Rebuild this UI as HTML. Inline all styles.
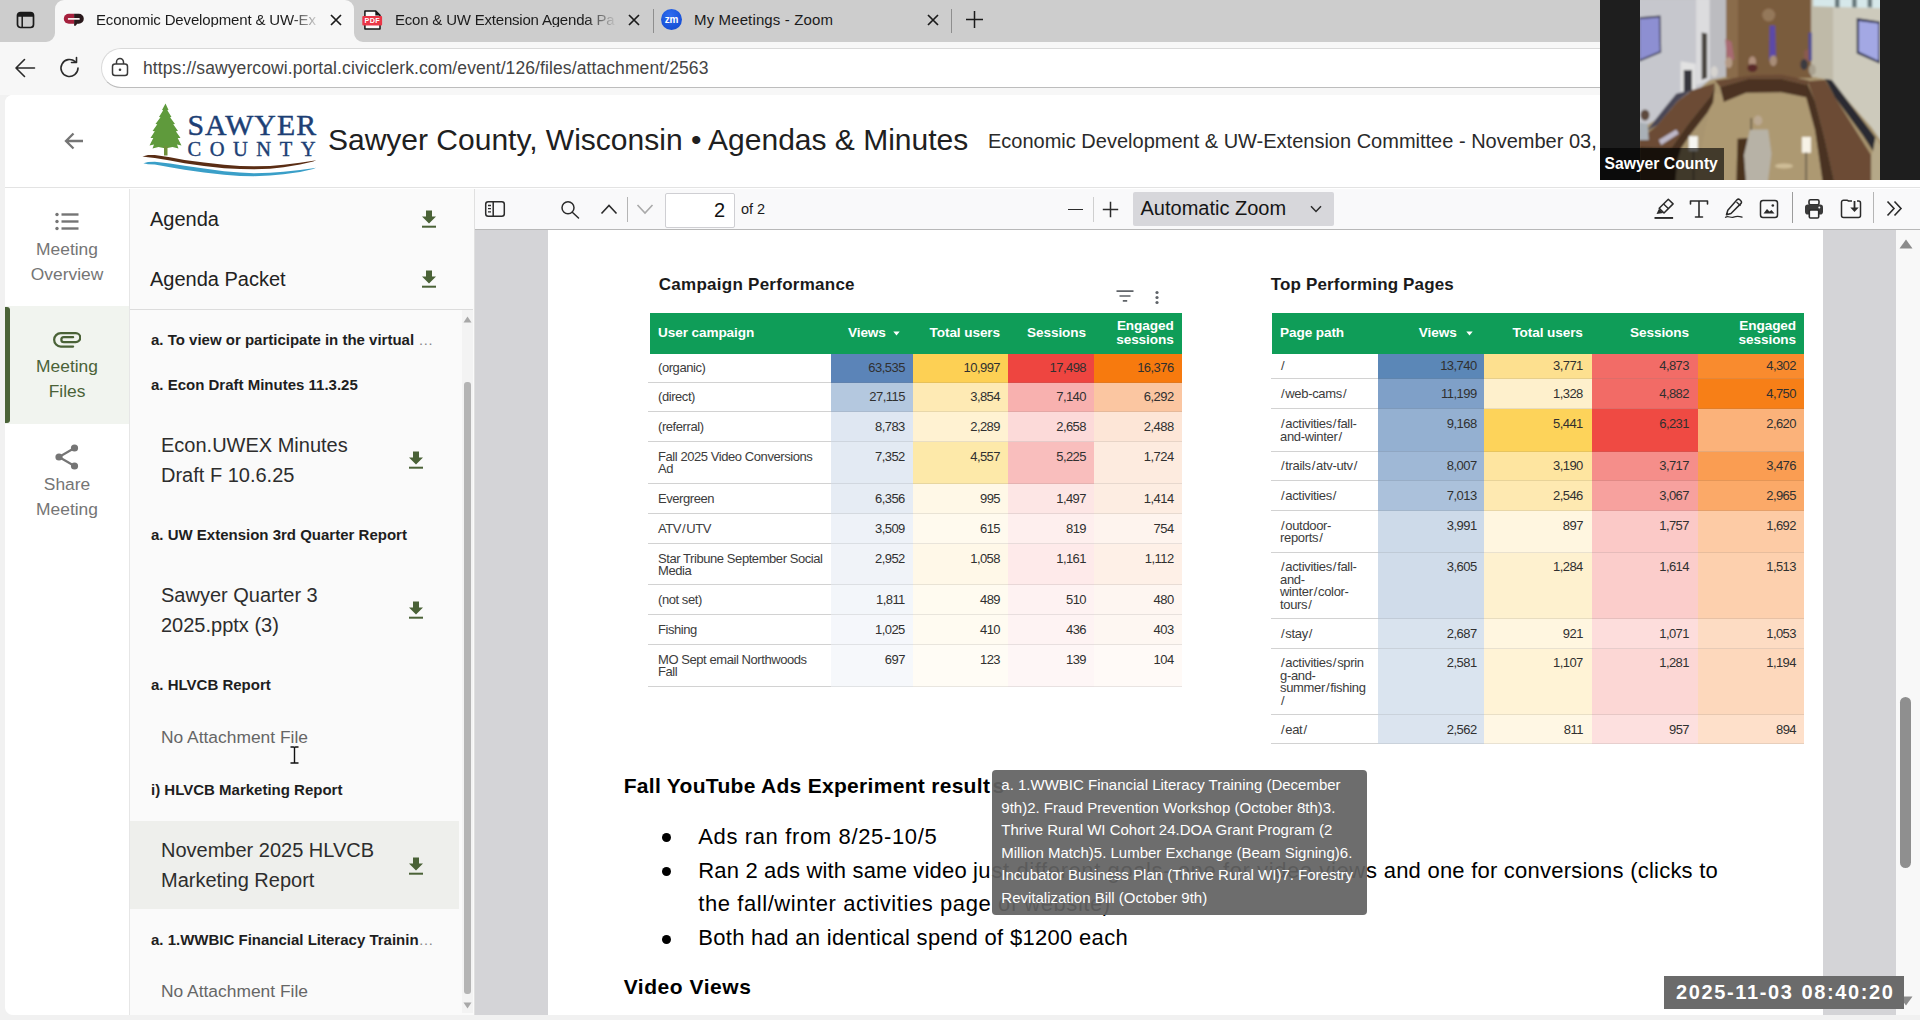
<!DOCTYPE html>
<html lang="en">
<head>
<meta charset="utf-8">
<title>Economic Development &amp; UW-Extension Committee</title>
<style>
*{box-sizing:border-box;margin:0;padding:0}
html,body{width:1920px;height:1020px;overflow:hidden;background:#fff}
body{font-family:"Liberation Sans",sans-serif;color:#1f1f1f;position:relative}
.abs{position:absolute}
#root{position:absolute;left:0;top:0;width:1920px;height:1020px;overflow:hidden;background:#f1f1f1}
.t{position:absolute;white-space:nowrap;line-height:1}
/* browser chrome */
#tabbar{left:0;top:0;width:1920px;height:42px;background:#cdcdcd}
#acttab{left:55px;top:0;width:299px;height:42px;background:#f7f7f7;border-radius:9px 9px 0 0}
#toolbar{left:0;top:42px;width:1920px;height:53px;background:#f7f7f7}
#pill{left:101px;top:48px;width:1830px;height:40px;background:#fff;border:1px solid #d9d9d9;border-bottom-color:#bdbdbd;border-radius:20px}
/* page */
#page{left:5px;top:95px;width:1915px;height:925px;background:#fff;border-radius:8px 0 0 0}
#hdr{left:5px;top:95px;width:1915px;height:93px;background:#fff;border-bottom:1px solid #e3e3e3;border-radius:8px 0 0 0}
#nav{left:5px;top:189px;width:124px;height:831px;background:#fff}
#files{left:129px;top:189px;width:345px;height:831px;background:#fafafa;border-left:1px solid #e6e6e6}
#pdf{left:474px;top:189px;width:1446px;height:831px;background:#d4d4d7;border-left:1px solid #e0e0e0}
#pdftb{left:475px;top:189px;width:1445px;height:41px;background:#f9f9fa;border-bottom:1px solid #b8b8b8}
#sheet{left:548px;top:230px;width:1275px;height:790px;background:#fff}
#vscroll{left:1896px;top:230px;width:24px;height:790px;background:#f8f8f8}
</style>
</head>
<body>
<div id="root">
<!-- BROWSER CHROME -->
<div id="tabbar" class="abs"></div>
<div id="acttab" class="abs"></div>
<div id="toolbar" class="abs"></div>
<div id="pill" class="abs"></div>
<!-- PAGE -->
<div id="page" class="abs"></div>
<div id="hdr" class="abs"></div>
<div id="nav" class="abs"></div>
<div id="files" class="abs"></div>
<div id="pdf" class="abs"></div>
<div id="pdftb" class="abs"></div>
<div id="sheet" class="abs"></div>
<div id="vscroll" class="abs"></div>
<!--CHROME-START-->
<svg class="abs" style="left:46px;top:33px" width="9" height="9" viewBox="0 0 9 9"><path d="M9 0v9H0A9 9 0 0 0 9 0z" fill="#f7f7f7"/></svg>
<svg class="abs" style="left:354px;top:33px" width="9" height="9" viewBox="0 0 9 9"><path d="M0 0v9h9A9 9 0 0 1 0 0z" fill="#f7f7f7"/></svg>
<!-- tab actions icon -->
<svg class="abs" style="left:15px;top:9px" width="22" height="22" viewBox="0 0 22 22"><rect x="2.5" y="3.5" width="16" height="15" rx="3" fill="none" stroke="#1b1b1b" stroke-width="1.7"/><path d="M2.5 6.5a3 3 0 0 1 3-3h10a3 3 0 0 1 3 3v1.2h-16z" fill="#1b1b1b"/><line x1="7.2" y1="7" x2="7.2" y2="18" stroke="#1b1b1b" stroke-width="1.5"/></svg>
<!-- tab 1 -->
<svg class="abs" style="left:63px;top:11px" width="22" height="16" viewBox="0 0 22 16"><path d="M11.100 2.800H5.800a5 5 0 0 0 0 10H11.100z" fill="#a5203d"/><path d="M11.100 2.800H15.800a5 5 0 0 1 0 10H14.200L12.600 14.800H11.100z" fill="#2a191c"/><rect x="4.900" y="6.900" width="11.800" height="1.800" rx="0.500" fill="#f7f0f0"/></svg>
<div class="t" id="tab1t" style="left:96px;top:12px;font-size:15px;letter-spacing:-0.15px;color:#1b1b1b;width:226px;overflow:hidden;-webkit-mask-image:linear-gradient(90deg,#000 86%,transparent 100%)">Economic Development &amp; UW-Ex</div>
<svg class="abs" style="left:330px;top:14px" width="12" height="12" viewBox="0 0 12 12"><path d="M1 1l10 10M11 1L1 11" stroke="#1b1b1b" stroke-width="1.7"/></svg>
<!-- tab 2 -->
<svg class="abs" style="left:362px;top:9px" width="22" height="24" viewBox="0 0 22 24"><path d="M2.900 1.900h10.600l4.500 4.500v13.600h-15.100z" fill="#fafafa" stroke="#151515" stroke-width="1.500" stroke-linejoin="round"/><path d="M13.300 1.900v4.700h4.700z" fill="#151515"/><rect x="0.300" y="7.100" width="19.800" height="9.400" rx="1" fill="#ea3546"/><text x="10.200" y="14.400" font-family="Liberation Sans,sans-serif" font-size="7.200" font-weight="700" fill="#fff" text-anchor="middle" letter-spacing="0.300">PDF</text></svg>
<div class="t" id="tab2t" style="left:395px;top:12px;font-size:15px;letter-spacing:-0.2px;color:#1b1b1b;width:222px;overflow:hidden;-webkit-mask-image:linear-gradient(90deg,#000 86%,transparent 100%)">Econ &amp; UW Extension Agenda Pa</div>
<svg class="abs" style="left:628px;top:14px" width="12" height="12" viewBox="0 0 12 12"><path d="M1 1l10 10M11 1L1 11" stroke="#1b1b1b" stroke-width="1.7"/></svg>
<div class="abs" style="left:653px;top:9px;width:1px;height:24px;background:#8e8e8e"></div>
<!-- tab 3 -->
<div class="abs" style="left:661px;top:9px;width:21px;height:21px;border-radius:50%;background:radial-gradient(circle at 45% 30%,#2f6cf0,#0d45cc)"></div>
<div class="t" style="left:663px;top:14.500px;font-size:10px;font-weight:700;color:#fff;width:17px;text-align:center;letter-spacing:-0.3px">zm</div>
<div class="t" id="tab3t" style="left:694px;top:12px;font-size:15px;letter-spacing:0.13px;color:#1b1b1b">My Meetings - Zoom</div>
<svg class="abs" style="left:927px;top:14px" width="12" height="12" viewBox="0 0 12 12"><path d="M1 1l10 10M11 1L1 11" stroke="#1b1b1b" stroke-width="1.7"/></svg>
<div class="abs" style="left:951px;top:9px;width:1px;height:24px;background:#8e8e8e"></div>
<svg class="abs" style="left:965px;top:10px" width="19" height="19" viewBox="0 0 19 19"><path d="M9.500 1v17M1 9.500h17" stroke="#1b1b1b" stroke-width="1.500"/></svg>
<!-- toolbar -->
<svg class="abs" style="left:14px;top:57px" width="22" height="22" viewBox="0 0 22 22"><path d="M20.500 11H2.500M10.500 2.500L2 11l8.500 8.500" fill="none" stroke="#2a2a2a" stroke-width="1.600" stroke-linecap="round" stroke-linejoin="round"/></svg>
<svg class="abs" style="left:58px;top:56px" width="24" height="24" viewBox="0 0 24 24"><path d="M20 12a8.500 8.500 0 1 1-2.800-6.300" fill="none" stroke="#2a2a2a" stroke-width="1.600" stroke-linecap="round"/><path d="M18.500 1.500v5h-5" fill="none" stroke="#2a2a2a" stroke-width="1.600" stroke-linecap="round" stroke-linejoin="round"/></svg>
<svg class="abs" style="left:111px;top:57px" width="18" height="20" viewBox="0 0 18 20"><rect x="1.500" y="7" width="15" height="11.500" rx="2.500" fill="none" stroke="#3a3a3a" stroke-width="1.500"/><path d="M5.500 7V5a3.500 3.500 0 0 1 7 0v2" fill="none" stroke="#3a3a3a" stroke-width="1.500"/><circle cx="9" cy="12.700" r="1.300" fill="#3a3a3a"/></svg>
<div class="t" id="urlt" style="left:143px;top:60px;font-size:17.500px;color:#444;letter-spacing:0.1px">https://sawyercowi.portal.civicclerk.com/event/126/files/attachment/2563</div>
<!--CHROME-END-->
<!--HEADER-START-->
<svg class="abs" style="left:62px;top:129px" width="24" height="24" viewBox="0 0 24 24"><path d="M21 12H4M11.500 4.500L4 12l7.500 7.500" fill="none" stroke="#757575" stroke-width="2.300"/></svg>
<!-- logo -->
<svg class="abs" style="left:140px;top:100px" width="180" height="80" viewBox="140 100 180 80">
<path d="M165.500 103.500L168.500 110l-1.200 0.300L171.500 117l-1.500 0.300L175 124l-1.800 0.300L178 131l-2.200 0.200L180.500 138l-2.800 0L181.500 145.500l-4.500 -1L178.500 148.500l-6 -1.500L167.500 148l-4 0l-5 -1l-6 1.500L154 144.500l-4.500 1L153.300 138l-2.800 0L154.800 131.200l-2.200 -0.200L157.300 124.300l-1.800 -0.300L160.500 117.300l-1.500 -0.300L163.200 110.300l-1.200 -0.300z" fill="#5f9a3c"/>
<rect x="164" y="146" width="3.500" height="9.500" fill="#6f8f3a"/>
<path d="M142.4 156.4 L148.0 155.0 L154.8 154.9 L170.0 157.2 L184.5 159.9 L204.0 162.6 L224.1 164.8 L240.0 165.9 L253.8 166.3 L270.0 165.9 L283.5 164.8 L300.0 162.8 L313.2 160.8 L316.2 160.3 L313.2 161.6 L300.0 164.6 L283.5 167.3 L270.0 168.7 L253.8 169.3 L240.0 169.1 L224.1 168.3 L204.0 166.0 L184.5 163.3 L170.0 160.6 L154.8 157.9 L148.0 157.3z" fill="#5a2d14"/>
<path d="M143.4 163.3 L148.0 162.0 L154.8 161.8 L170.0 163.6 L184.5 165.8 L204.0 168.6 L224.1 171.2 L240.0 172.6 L253.8 173.2 L270.0 172.8 L283.5 171.7 L300.0 170.0 L313.2 168.3 L316.0 167.8 L313.2 169.0 L300.0 171.9 L283.5 174.2 L270.0 175.6 L253.8 176.2 L240.0 175.9 L224.1 174.7 L204.0 172.4 L184.5 169.8 L170.0 167.2 L154.8 164.6 L148.0 164.2z" fill="#3a9fc8"/>
<text x="187.500" y="135.200" font-family="Liberation Serif,serif" font-size="29.800" fill="#1d3f75" stroke="#1d3f75" stroke-width="0.450" textLength="128.500" lengthAdjust="spacing">SAWYER</text>
<text x="187.500" y="155.900" font-family="Liberation Serif,serif" font-size="20.500" fill="#1d3f75" stroke="#1d3f75" stroke-width="0.400" textLength="128" lengthAdjust="spacing">COUNTY</text>
</svg>
<div class="t" id="ttl" style="left:328px;top:125px;font-size:30px;color:#202020">Sawyer County, Wisconsin • Agendas &amp; Minutes</div>
<div class="t" id="sub" style="left:988px;top:131px;font-size:20px;color:#2a2a2a">Economic Development &amp; UW-Extension Committee - November 03,</div>
<!--HEADER-END-->
<!--NAV-START-->
<div class="abs" style="left:5px;top:306px;width:124px;height:118px;background:#f1f4ef"></div>
<div class="abs" style="left:5px;top:307px;width:5px;height:116px;background:#4a6237;border-radius:0 3px 3px 0"></div>
<svg class="abs" style="left:55px;top:211px" width="24" height="22" viewBox="0 0 24 22"><g fill="#757575"><circle cx="2" cy="3.500" r="1.700"/><circle cx="2" cy="10.500" r="1.700"/><circle cx="2" cy="17.500" r="1.700"/><rect x="6.500" y="2.300" width="17" height="2.400"/><rect x="6.500" y="9.300" width="17" height="2.400"/><rect x="6.500" y="16.300" width="17" height="2.400"/></g></svg>
<div class="t" style="left:5px;top:241px;font-size:17.4px;color:#757575;width:124px;text-align:center;">Meeting</div>
<div class="t" style="left:5px;top:266px;font-size:17.4px;color:#757575;width:124px;text-align:center;">Overview</div>
<svg class="abs" style="left:53px;top:330px" width="28" height="19" viewBox="0 0 28 19"><path d="M20.100 16.500H7.800A6.650 6.650 0 0 1 7.800 3.200H22.800A4.450 4.450 0 0 1 22.800 12.100H10.800A2.450 2.450 0 0 1 10.800 7.200H20.100" fill="none" stroke="#4a6237" stroke-width="2.250" stroke-linecap="round"/></svg>
<div class="t" style="left:5px;top:358px;font-size:17.4px;color:#4a6237;width:124px;text-align:center;">Meeting</div>
<div class="t" style="left:5px;top:383px;font-size:17.4px;color:#4a6237;width:124px;text-align:center;">Files</div>
<svg class="abs" style="left:54px;top:443px" width="26" height="28" viewBox="0 0 26 28"><g fill="#757575"><circle cx="20.500" cy="5" r="3.600"/><circle cx="5" cy="14" r="3.600"/><circle cx="20.500" cy="23" r="3.600"/></g><path d="M20.500 5L5 14l15.500 9" fill="none" stroke="#757575" stroke-width="2.200"/></svg>
<div class="t" style="left:5px;top:476px;font-size:17.4px;color:#757575;width:124px;text-align:center;">Share</div>
<div class="t" style="left:5px;top:501px;font-size:17.4px;color:#757575;width:124px;text-align:center;">Meeting</div>
<!--NAV-END-->
<!--FILES-START-->
<div class="t" style="left:150px;top:209px;font-size:20px;color:#212121;">Agenda</div>
<div class="t" style="left:150px;top:269px;font-size:20px;color:#212121;">Agenda Packet</div>
<svg class="abs" style="left:421.1px;top:210px" width="16" height="18" viewBox="0 0 16 18"><path d="M5 0.500h6v6h4l-7 7 -7 -7h4z" fill="#4a6237"/><rect x="1" y="15.700" width="14" height="2" fill="#4a6237"/></svg>
<svg class="abs" style="left:421.1px;top:270px" width="16" height="18" viewBox="0 0 16 18"><path d="M5 0.500h6v6h4l-7 7 -7 -7h4z" fill="#4a6237"/><rect x="1" y="15.700" width="14" height="2" fill="#4a6237"/></svg>
<div class="abs" style="left:130px;top:309px;width:343px;height:1px;background:#dcdcdc"></div>
<div class="abs" style="left:130px;top:821px;width:329px;height:88px;background:#eeefec"></div>
<div class="t" id="h1" style="left:151px;top:332px;font-size:15px;color:#1e1e1e;font-weight:700;">a. To view or participate in the virtual <span style="font-weight:400;color:#888;letter-spacing:1px">…</span></div>
<div class="t" id="h2" style="left:151px;top:377px;font-size:15px;color:#1e1e1e;font-weight:700;">a. Econ Draft Minutes 11.3.25</div>
<div class="t" id="f1" style="left:161px;top:435px;font-size:20px;color:#2d2d2d;">Econ.UWEX Minutes</div>
<div class="t" style="left:161px;top:465px;font-size:20px;color:#2d2d2d;">Draft F 10.6.25</div>
<svg class="abs" style="left:408.1px;top:451px" width="16" height="18" viewBox="0 0 16 18"><path d="M5 0.500h6v6h4l-7 7 -7 -7h4z" fill="#4a6237"/><rect x="1" y="15.700" width="14" height="2" fill="#4a6237"/></svg>
<div class="t" id="h3" style="left:151px;top:527px;font-size:15px;color:#1e1e1e;font-weight:700;">a. UW Extension 3rd Quarter Report</div>
<div class="t" style="left:161px;top:585px;font-size:20px;color:#2d2d2d;">Sawyer Quarter 3</div>
<div class="t" style="left:161px;top:615px;font-size:20px;color:#2d2d2d;">2025.pptx (3)</div>
<svg class="abs" style="left:408.1px;top:601px" width="16" height="18" viewBox="0 0 16 18"><path d="M5 0.500h6v6h4l-7 7 -7 -7h4z" fill="#4a6237"/><rect x="1" y="15.700" width="14" height="2" fill="#4a6237"/></svg>
<div class="t" style="left:151px;top:677px;font-size:15px;color:#1e1e1e;font-weight:700;">a. HLVCB Report</div>
<div class="t" id="na" style="left:161px;top:729px;font-size:17.4px;color:#666;">No Attachment File</div>
<div class="t" style="left:151px;top:782px;font-size:15px;color:#1e1e1e;font-weight:700;">i) HLVCB Marketing Report</div>
<div class="t" id="f3" style="left:161px;top:840px;font-size:20px;color:#2d2d2d;">November 2025 HLVCB</div>
<div class="t" style="left:161px;top:870px;font-size:20px;color:#2d2d2d;">Marketing Report</div>
<svg class="abs" style="left:408.1px;top:856.5px" width="16" height="18" viewBox="0 0 16 18"><path d="M5 0.500h6v6h4l-7 7 -7 -7h4z" fill="#4a6237"/><rect x="1" y="15.700" width="14" height="2" fill="#4a6237"/></svg>
<div class="t" id="h6" style="left:151px;top:932px;font-size:15px;color:#1e1e1e;font-weight:700;">a. 1.WWBIC Financial Literacy Trainin<span style="font-weight:400;color:#888;letter-spacing:1px">…</span></div>
<div class="t" style="left:161px;top:983px;font-size:17.4px;color:#666;">No Attachment File</div>
<div class="abs" style="left:462px;top:310px;width:11px;height:703px;background:#f3f3f3"></div>
<div class="abs" style="left:464px;top:382px;width:7px;height:612px;background:#b4b4b4;border-radius:3px"></div>
<svg class="abs" style="left:463px;top:316px" width="9" height="7" viewBox="0 0 9 7"><path d="M4.500 0.500L8.500 6.500h-8z" fill="#a8a8a8"/></svg>
<svg class="abs" style="left:463px;top:1002px" width="9" height="7" viewBox="0 0 9 7"><path d="M4.500 6.500L8.500 0.500h-8z" fill="#a8a8a8"/></svg>
<svg class="abs" style="left:289px;top:746px" width="11" height="18" viewBox="0 0 11 18"><path d="M1.500 1h3a1 1 0 0 1 1 1a1 1 0 0 1 1 -1h3M5.500 2v14M1.500 17h3a1 1 0 0 0 1 -1a1 1 0 0 0 1 1h3" fill="none" stroke="#111" stroke-width="1.400"/></svg>
<!--FILES-END-->
<!--PDFTB-START-->
<svg class="abs" style="left:484px;top:200px" width="22" height="18" viewBox="0 0 22 18"><rect x="1.700" y="1.700" width="18.600" height="14.600" rx="2.500" fill="none" stroke="#2b2b2b" stroke-width="1.500"/><line x1="9.200" y1="1.700" x2="9.200" y2="16.300" stroke="#2b2b2b" stroke-width="1.500"/><path d="M4 5.500h3M4 8.700h3M4 11.900h3" stroke="#2b2b2b" stroke-width="1.300"/></svg>
<svg class="abs" style="left:560px;top:200px" width="20" height="19" viewBox="0 0 20 19"><circle cx="8" cy="7.700" r="6" fill="none" stroke="#2b2b2b" stroke-width="1.500"/><path d="M12.300 12.200L18.500 18" stroke="#2b2b2b" stroke-width="1.500" stroke-linecap="round"/></svg>
<svg class="abs" style="left:600px;top:203px" width="18" height="12" viewBox="0 0 18 12"><path d="M1.500 10.500L9 2.500l7.500 8" fill="none" stroke="#2b2b2b" stroke-width="1.600"/></svg>
<div class="abs" style="left:627px;top:197px;width:1px;height:25px;background:#b5b5b5"></div>
<svg class="abs" style="left:636px;top:203px" width="18" height="12" viewBox="0 0 18 12"><path d="M1.500 2L9 10l7.500 -8" fill="none" stroke="#a9a9a9" stroke-width="1.600"/></svg>
<div class="abs" style="left:665px;top:193px;width:70px;height:35px;background:#fff;border:1px solid #cfcfd3;border-radius:2px"></div>
<div class="t" id="pn" style="left:665px;top:200px;font-size:20px;color:#111;width:60px;text-align:right;">2</div>
<div class="t" id="of2" style="left:741px;top:202px;font-size:14.5px;color:#1b1b1b;">of 2</div>
<div class="abs" style="left:1067.500px;top:208.700px;width:15.500px;height:1.500px;background:#2b2b2b"></div>
<div class="abs" style="left:1093px;top:197px;width:1px;height:25px;background:#cfcfcf"></div>
<svg class="abs" style="left:1102px;top:201px" width="17" height="17" viewBox="0 0 17 17"><path d="M8.500 0.800v15.400M0.800 8.500h15.400" stroke="#2b2b2b" stroke-width="1.500"/></svg>
<div class="abs" style="left:1133px;top:192px;width:200.500px;height:34px;background:#d7d7db;border-radius:2px"></div>
<div class="t" id="az" style="left:1140.5px;top:198px;font-size:20px;color:#151515;">Automatic Zoom</div>
<svg class="abs" style="left:1310px;top:205px" width="12" height="8" viewBox="0 0 12 8"><path d="M1 1.200L6 6.500l5 -5.300" fill="none" stroke="#2b2b2b" stroke-width="1.500"/></svg>
<svg class="abs" style="left:1653px;top:198px" width="22" height="22" viewBox="0 0 22 22"><path d="M15.300 1.300L20.100 5.900L11 15L6.200 10.200z" fill="none" stroke="#2b2b2b" stroke-width="1.500" stroke-linejoin="round"/><path d="M10.600 5.900L15.300 10.600" stroke="#2b2b2b" stroke-width="1.400"/><path d="M6 10.800L10.300 15.100L3.500 15.900z" fill="#2b2b2b"/><rect x="1.500" y="19" width="18.600" height="1.900" fill="#2b2b2b"/></svg>
<svg class="abs" style="left:1689px;top:199px" width="20" height="20" viewBox="0 0 20 20"><path d="M1.500 5V2h17v3M10 2v16M6.500 18h7" fill="none" stroke="#2b2b2b" stroke-width="1.600" stroke-linejoin="round" stroke-linecap="round"/></svg>
<svg class="abs" style="left:1724px;top:198px" width="20" height="22" viewBox="0 0 20 22"><path d="M13 1.800a2 2 0 0 1 2.800 0l1 1a2 2 0 0 1 0 2.800L7 15.500 2.500 16.800 3.800 12.300z" fill="none" stroke="#2b2b2b" stroke-width="1.500" stroke-linejoin="round"/><path d="M12.500 4L16.500 7.700" stroke="#2b2b2b" stroke-width="1.300"/><path d="M1.500 19.200c3 -2 5 1.200 8 0s4.500 -1.500 8.500 0" fill="none" stroke="#2b2b2b" stroke-width="1.300" stroke-linecap="round"/></svg>
<svg class="abs" style="left:1759px;top:199px" width="20" height="20" viewBox="0 0 20 20"><rect x="1.500" y="1.500" width="17" height="17" rx="2.500" fill="none" stroke="#2b2b2b" stroke-width="1.500"/><path d="M4.500 14.500l3.500 -4.500 2.500 2.500 2 -1.500 3 3.500z" fill="#2b2b2b"/><circle cx="13.800" cy="6.500" r="1.300" fill="#2b2b2b"/></svg>
<div class="abs" style="left:1791.500px;top:192px;width:1.500px;height:31px;background:#9c9c9c"></div>
<svg class="abs" style="left:1804px;top:198px" width="20" height="22" viewBox="0 0 20 22"><rect x="5" y="1.800" width="10" height="5" rx="1.500" fill="none" stroke="#2b2b2b" stroke-width="1.600"/><rect x="1" y="6.500" width="18" height="10" rx="2.800" fill="#3a3a3a"/><rect x="5.300" y="12" width="9.400" height="8" rx="1.300" fill="#f9f9fa" stroke="#2b2b2b" stroke-width="1.600"/><circle cx="15.300" cy="9.500" r="1" fill="#f9f9fa"/></svg>
<svg class="abs" style="left:1840px;top:199px" width="22" height="20" viewBox="0 0 22 20"><path d="M12 2H8.500L7 1.200H3.500a2 2 0 0 0 -2 2v13.300a2 2 0 0 0 2 2h15a2 2 0 0 0 2 -2V4a2 2 0 0 0 -2 -2H17" fill="none" stroke="#2b2b2b" stroke-width="1.500" stroke-linejoin="round"/><path d="M14.500 2v8.500" stroke="#2b2b2b" stroke-width="1.800"/><path d="M10.300 8.500h8.400l-4.200 4.500z" fill="#2b2b2b"/></svg>
<div class="abs" style="left:1873px;top:192px;width:1px;height:31px;background:#b5b5b5"></div>
<svg class="abs" style="left:1886px;top:200px" width="17" height="17" viewBox="0 0 17 17"><path d="M1.500 1.500L8 8.500l-6.500 7M8.500 1.500L15 8.500l-6.500 7" fill="none" stroke="#2b2b2b" stroke-width="1.600"/></svg>
<svg class="abs" style="left:1899px;top:239px" width="14" height="10" viewBox="0 0 14 10"><path d="M7 0.500L13.500 9.500h-13z" fill="#8b8b8b"/></svg>
<div class="abs" style="left:1900px;top:697px;width:11px;height:171px;background:#8f8f8f;border-radius:6px"></div>
<svg class="abs" style="left:1899px;top:996px" width="14" height="10" viewBox="0 0 14 10"><path d="M7 9.500L13.500 0.500h-13z" fill="#8b8b8b"/></svg>
<!--PDFTB-END-->
<!--SHEET-START-->
<div class="t" id="t1t" style="left:658.8px;top:276px;font-size:17px;color:#1a1a1a;font-weight:700;letter-spacing:0.26px;">Campaign Performance</div>
<div class="t" id="t2t" style="left:1270.7px;top:276px;font-size:17px;color:#1a1a1a;font-weight:700;letter-spacing:0.16px;">Top Performing Pages</div>
<svg class="abs" style="left:1116px;top:290px" width="18" height="12" viewBox="0 0 18 12"><path d="M0.500 1.200h17M3.500 6h11M6.800 10.800h4.400" stroke="#5f6368" stroke-width="1.700"/></svg>
<svg class="abs" style="left:1154px;top:290px" width="6" height="15" viewBox="0 0 6 15"><g fill="#5f6368"><circle cx="3" cy="2.500" r="1.600"/><circle cx="3" cy="7.500" r="1.600"/><circle cx="3" cy="12.500" r="1.600"/></g></svg>
<div class="abs" style="left:649.7px;top:313.4px;width:532.3px;height:40.6px;background:#0f9d58;"></div>
<div class="t" id="ah0" style="left:658px;top:326px;font-size:13.6px;color:#fff;font-weight:700;letter-spacing:-0.1px;">User campaign</div>
<div class="t" id="ah1" style="left:848px;top:326px;font-size:13.6px;color:#fff;font-weight:700;letter-spacing:-0.1px;">Views</div>
<svg class="abs" style="left:893px;top:331px" width="7" height="5" viewBox="0 0 7 5"><path d="M0.300 0.500h6.400L3.500 4.500z" fill="#fff"/></svg>
<div class="t" id="ah2" style="right:920px;top:326px;font-size:13.6px;color:#fff;font-weight:700;letter-spacing:-0.1px;">Total users</div>
<div class="t" id="ah3" style="right:834px;top:326px;font-size:13.6px;color:#fff;font-weight:700;letter-spacing:-0.1px;">Sessions</div>
<div class="t" style="right:746.4000000000001px;top:319px;font-size:13.6px;color:#fff;font-weight:700;letter-spacing:-0.1px;">Engaged</div>
<div class="t" style="right:746.4000000000001px;top:333px;font-size:13.6px;color:#fff;font-weight:700;letter-spacing:-0.1px;">sessions</div>
<div class="abs" style="left:831.0px;top:354.0px;width:81.5px;height:29.0px;background:#5b84b8;"></div>
<div class="abs" style="left:912.5px;top:354.0px;width:95.5px;height:29.0px;background:#fdd054;"></div>
<div class="abs" style="left:1008.0px;top:354.0px;width:85.5px;height:29.0px;background:#ee4540;"></div>
<div class="abs" style="left:1093.5px;top:354.0px;width:88.5px;height:29.0px;background:#f77a0e;"></div>
<div class="abs" style="left:648.2px;top:382.2px;width:182.8px;height:1.0px;background:#d2d2d2;"></div>
<div class="abs" style="left:831.0px;top:382.2px;width:351.0px;height:1.0px;background:rgba(120,120,120,0.16);"></div>
<div class="t" id="ar0l0" style="left:658px;top:361px;font-size:13px;color:#3c3c3c;letter-spacing:-0.43px;">(organic)</div>
<div class="t" style="right:1015.2px;top:361px;font-size:13px;color:#303030;letter-spacing:-0.55px;">63,535</div>
<div class="t" style="right:920px;top:361px;font-size:13px;color:#303030;letter-spacing:-0.55px;">10,997</div>
<div class="t" style="right:834px;top:361px;font-size:13px;color:#303030;letter-spacing:-0.55px;">17,498</div>
<div class="t" style="right:746.4000000000001px;top:361px;font-size:13px;color:#303030;letter-spacing:-0.55px;">16,376</div>
<div class="abs" style="left:831.0px;top:383.0px;width:81.5px;height:29.0px;background:#b4c8df;"></div>
<div class="abs" style="left:912.5px;top:383.0px;width:95.5px;height:29.0px;background:#feeab4;"></div>
<div class="abs" style="left:1008.0px;top:383.0px;width:85.5px;height:29.0px;background:#f8b1af;"></div>
<div class="abs" style="left:1093.5px;top:383.0px;width:88.5px;height:29.0px;background:#fbc6a1;"></div>
<div class="abs" style="left:648.2px;top:411.2px;width:182.8px;height:1.0px;background:#d2d2d2;"></div>
<div class="abs" style="left:831.0px;top:411.2px;width:351.0px;height:1.0px;background:rgba(120,120,120,0.16);"></div>
<div class="t" id="ar1l0" style="left:658px;top:390px;font-size:13px;color:#3c3c3c;letter-spacing:-0.43px;">(direct)</div>
<div class="t" style="right:1015.2px;top:390px;font-size:13px;color:#303030;letter-spacing:-0.55px;">27,115</div>
<div class="t" style="right:920px;top:390px;font-size:13px;color:#303030;letter-spacing:-0.55px;">3,854</div>
<div class="t" style="right:834px;top:390px;font-size:13px;color:#303030;letter-spacing:-0.55px;">7,140</div>
<div class="t" style="right:746.4000000000001px;top:390px;font-size:13px;color:#303030;letter-spacing:-0.55px;">6,292</div>
<div class="abs" style="left:831.0px;top:412.0px;width:81.5px;height:30.0px;background:#dfe7f2;"></div>
<div class="abs" style="left:912.5px;top:412.0px;width:95.5px;height:30.0px;background:#fff2d2;"></div>
<div class="abs" style="left:1008.0px;top:412.0px;width:85.5px;height:30.0px;background:#fcdad9;"></div>
<div class="abs" style="left:1093.5px;top:412.0px;width:88.5px;height:30.0px;background:#fde6d7;"></div>
<div class="abs" style="left:648.2px;top:441.2px;width:182.8px;height:1.0px;background:#d2d2d2;"></div>
<div class="abs" style="left:831.0px;top:441.2px;width:351.0px;height:1.0px;background:rgba(120,120,120,0.16);"></div>
<div class="t" id="ar2l0" style="left:658px;top:420px;font-size:13px;color:#3c3c3c;letter-spacing:-0.43px;">(referral)</div>
<div class="t" style="right:1015.2px;top:420px;font-size:13px;color:#303030;letter-spacing:-0.55px;">8,783</div>
<div class="t" style="right:920px;top:420px;font-size:13px;color:#303030;letter-spacing:-0.55px;">2,289</div>
<div class="t" style="right:834px;top:420px;font-size:13px;color:#303030;letter-spacing:-0.55px;">2,658</div>
<div class="t" style="right:746.4000000000001px;top:420px;font-size:13px;color:#303030;letter-spacing:-0.55px;">2,488</div>
<div class="abs" style="left:831.0px;top:442.0px;width:81.5px;height:42.0px;background:#e3eaf3;"></div>
<div class="abs" style="left:912.5px;top:442.0px;width:95.5px;height:42.0px;background:#fde9a9;"></div>
<div class="abs" style="left:1008.0px;top:442.0px;width:85.5px;height:42.0px;background:#f9bebd;"></div>
<div class="abs" style="left:1093.5px;top:442.0px;width:88.5px;height:42.0px;background:#fdebdf;"></div>
<div class="abs" style="left:648.2px;top:483.2px;width:182.8px;height:1.0px;background:#d2d2d2;"></div>
<div class="abs" style="left:831.0px;top:483.2px;width:351.0px;height:1.0px;background:rgba(120,120,120,0.16);"></div>
<div class="t" id="ar3l0" style="left:658px;top:450px;font-size:13px;color:#3c3c3c;letter-spacing:-0.43px;">Fall 2025 Video Conversions</div>
<div class="t" id="ar3l1" style="left:658px;top:462px;font-size:13px;color:#3c3c3c;letter-spacing:-0.43px;">Ad</div>
<div class="t" style="right:1015.2px;top:450px;font-size:13px;color:#303030;letter-spacing:-0.55px;">7,352</div>
<div class="t" style="right:920px;top:450px;font-size:13px;color:#303030;letter-spacing:-0.55px;">4,557</div>
<div class="t" style="right:834px;top:450px;font-size:13px;color:#303030;letter-spacing:-0.55px;">5,225</div>
<div class="t" style="right:746.4000000000001px;top:450px;font-size:13px;color:#303030;letter-spacing:-0.55px;">1,724</div>
<div class="abs" style="left:831.0px;top:484.0px;width:81.5px;height:30.0px;background:#e6ecf4;"></div>
<div class="abs" style="left:912.5px;top:484.0px;width:95.5px;height:30.0px;background:#fff8e7;"></div>
<div class="abs" style="left:1008.0px;top:484.0px;width:85.5px;height:30.0px;background:#fde6e5;"></div>
<div class="abs" style="left:1093.5px;top:484.0px;width:88.5px;height:30.0px;background:#fdede2;"></div>
<div class="abs" style="left:648.2px;top:513.2px;width:182.8px;height:1.0px;background:#d2d2d2;"></div>
<div class="abs" style="left:831.0px;top:513.2px;width:351.0px;height:1.0px;background:rgba(120,120,120,0.16);"></div>
<div class="t" id="ar4l0" style="left:658px;top:492px;font-size:13px;color:#3c3c3c;letter-spacing:-0.43px;">Evergreen</div>
<div class="t" style="right:1015.2px;top:492px;font-size:13px;color:#303030;letter-spacing:-0.55px;">6,356</div>
<div class="t" style="right:920px;top:492px;font-size:13px;color:#303030;letter-spacing:-0.55px;">995</div>
<div class="t" style="right:834px;top:492px;font-size:13px;color:#303030;letter-spacing:-0.55px;">1,497</div>
<div class="t" style="right:746.4000000000001px;top:492px;font-size:13px;color:#303030;letter-spacing:-0.55px;">1,414</div>
<div class="abs" style="left:831.0px;top:514.0px;width:81.5px;height:30.0px;background:#eef2f8;"></div>
<div class="abs" style="left:912.5px;top:514.0px;width:95.5px;height:30.0px;background:#fffaee;"></div>
<div class="abs" style="left:1008.0px;top:514.0px;width:85.5px;height:30.0px;background:#feefee;"></div>
<div class="abs" style="left:1093.5px;top:514.0px;width:88.5px;height:30.0px;background:#fef4ee;"></div>
<div class="abs" style="left:648.2px;top:543.2px;width:182.8px;height:1.0px;background:#d2d2d2;"></div>
<div class="abs" style="left:831.0px;top:543.2px;width:351.0px;height:1.0px;background:rgba(120,120,120,0.16);"></div>
<div class="t" id="ar5l0" style="left:658px;top:522px;font-size:13px;color:#3c3c3c;letter-spacing:-0.43px;">ATV<span style="margin:0 1px">/</span>UTV</div>
<div class="t" style="right:1015.2px;top:522px;font-size:13px;color:#303030;letter-spacing:-0.55px;">3,509</div>
<div class="t" style="right:920px;top:522px;font-size:13px;color:#303030;letter-spacing:-0.55px;">615</div>
<div class="t" style="right:834px;top:522px;font-size:13px;color:#303030;letter-spacing:-0.55px;">819</div>
<div class="t" style="right:746.4000000000001px;top:522px;font-size:13px;color:#303030;letter-spacing:-0.55px;">754</div>
<div class="abs" style="left:831.0px;top:544.0px;width:81.5px;height:41.0px;background:#f0f3f8;"></div>
<div class="abs" style="left:912.5px;top:544.0px;width:95.5px;height:41.0px;background:#fff8e8;"></div>
<div class="abs" style="left:1008.0px;top:544.0px;width:85.5px;height:41.0px;background:#feeaea;"></div>
<div class="abs" style="left:1093.5px;top:544.0px;width:88.5px;height:41.0px;background:#fef0e7;"></div>
<div class="abs" style="left:648.2px;top:584.2px;width:182.8px;height:1.0px;background:#d2d2d2;"></div>
<div class="abs" style="left:831.0px;top:584.2px;width:351.0px;height:1.0px;background:rgba(120,120,120,0.16);"></div>
<div class="t" id="ar6l0" style="left:658px;top:552px;font-size:13px;color:#3c3c3c;letter-spacing:-0.43px;">Star Tribune September Social</div>
<div class="t" id="ar6l1" style="left:658px;top:564px;font-size:13px;color:#3c3c3c;letter-spacing:-0.43px;">Media</div>
<div class="t" style="right:1015.2px;top:552px;font-size:13px;color:#303030;letter-spacing:-0.55px;">2,952</div>
<div class="t" style="right:920px;top:552px;font-size:13px;color:#303030;letter-spacing:-0.55px;">1,058</div>
<div class="t" style="right:834px;top:552px;font-size:13px;color:#303030;letter-spacing:-0.55px;">1,161</div>
<div class="t" style="right:746.4000000000001px;top:552px;font-size:13px;color:#303030;letter-spacing:-0.55px;">1,112</div>
<div class="abs" style="left:831.0px;top:585.0px;width:81.5px;height:30.0px;background:#f3f6fa;"></div>
<div class="abs" style="left:912.5px;top:585.0px;width:95.5px;height:30.0px;background:#fffbf0;"></div>
<div class="abs" style="left:1008.0px;top:585.0px;width:85.5px;height:30.0px;background:#fef2f2;"></div>
<div class="abs" style="left:1093.5px;top:585.0px;width:88.5px;height:30.0px;background:#fef6f1;"></div>
<div class="abs" style="left:648.2px;top:614.2px;width:182.8px;height:1.0px;background:#d2d2d2;"></div>
<div class="abs" style="left:831.0px;top:614.2px;width:351.0px;height:1.0px;background:rgba(120,120,120,0.16);"></div>
<div class="t" id="ar7l0" style="left:658px;top:593px;font-size:13px;color:#3c3c3c;letter-spacing:-0.43px;">(not set)</div>
<div class="t" style="right:1015.2px;top:593px;font-size:13px;color:#303030;letter-spacing:-0.55px;">1,811</div>
<div class="t" style="right:920px;top:593px;font-size:13px;color:#303030;letter-spacing:-0.55px;">489</div>
<div class="t" style="right:834px;top:593px;font-size:13px;color:#303030;letter-spacing:-0.55px;">510</div>
<div class="t" style="right:746.4000000000001px;top:593px;font-size:13px;color:#303030;letter-spacing:-0.55px;">480</div>
<div class="abs" style="left:831.0px;top:615.0px;width:81.5px;height:30.0px;background:#f5f7fb;"></div>
<div class="abs" style="left:912.5px;top:615.0px;width:95.5px;height:30.0px;background:#fffbf1;"></div>
<div class="abs" style="left:1008.0px;top:615.0px;width:85.5px;height:30.0px;background:#fef3f3;"></div>
<div class="abs" style="left:1093.5px;top:615.0px;width:88.5px;height:30.0px;background:#fef7f2;"></div>
<div class="abs" style="left:648.2px;top:644.2px;width:182.8px;height:1.0px;background:#d2d2d2;"></div>
<div class="abs" style="left:831.0px;top:644.2px;width:351.0px;height:1.0px;background:rgba(120,120,120,0.16);"></div>
<div class="t" id="ar8l0" style="left:658px;top:623px;font-size:13px;color:#3c3c3c;letter-spacing:-0.43px;">Fishing</div>
<div class="t" style="right:1015.2px;top:623px;font-size:13px;color:#303030;letter-spacing:-0.55px;">1,025</div>
<div class="t" style="right:920px;top:623px;font-size:13px;color:#303030;letter-spacing:-0.55px;">410</div>
<div class="t" style="right:834px;top:623px;font-size:13px;color:#303030;letter-spacing:-0.55px;">436</div>
<div class="t" style="right:746.4000000000001px;top:623px;font-size:13px;color:#303030;letter-spacing:-0.55px;">403</div>
<div class="abs" style="left:831.0px;top:645.0px;width:81.5px;height:42.0px;background:#f6f8fb;"></div>
<div class="abs" style="left:912.5px;top:645.0px;width:95.5px;height:42.0px;background:#fffcf5;"></div>
<div class="abs" style="left:1008.0px;top:645.0px;width:85.5px;height:42.0px;background:#fef6f6;"></div>
<div class="abs" style="left:1093.5px;top:645.0px;width:88.5px;height:42.0px;background:#fffaf7;"></div>
<div class="abs" style="left:648.2px;top:686.2px;width:182.8px;height:1.0px;background:#d2d2d2;"></div>
<div class="abs" style="left:831.0px;top:686.2px;width:351.0px;height:1.0px;background:rgba(120,120,120,0.16);"></div>
<div class="t" id="ar9l0" style="left:658px;top:653px;font-size:13px;color:#3c3c3c;letter-spacing:-0.43px;">MO Sept email Northwoods</div>
<div class="t" id="ar9l1" style="left:658px;top:665px;font-size:13px;color:#3c3c3c;letter-spacing:-0.43px;">Fall</div>
<div class="t" style="right:1015.2px;top:653px;font-size:13px;color:#303030;letter-spacing:-0.55px;">697</div>
<div class="t" style="right:920px;top:653px;font-size:13px;color:#303030;letter-spacing:-0.55px;">123</div>
<div class="t" style="right:834px;top:653px;font-size:13px;color:#303030;letter-spacing:-0.55px;">139</div>
<div class="t" style="right:746.4000000000001px;top:653px;font-size:13px;color:#303030;letter-spacing:-0.55px;">104</div>
<div class="abs" style="left:1272.0px;top:313.4px;width:532.0px;height:40.6px;background:#0f9d58;"></div>
<div class="t" id="bh0" style="left:1280px;top:326px;font-size:13.6px;color:#fff;font-weight:700;letter-spacing:-0.1px;">Page path</div>
<div class="t" id="bh1" style="left:1418.8px;top:326px;font-size:13.6px;color:#fff;font-weight:700;letter-spacing:-0.1px;">Views</div>
<svg class="abs" style="left:1466px;top:331px" width="7" height="5" viewBox="0 0 7 5"><path d="M0.300 0.500h6.400L3.500 4.500z" fill="#fff"/></svg>
<div class="t" id="bh2" style="right:337.20000000000005px;top:326px;font-size:13.6px;color:#fff;font-weight:700;letter-spacing:-0.1px;">Total users</div>
<div class="t" id="bh3" style="right:231px;top:326px;font-size:13.6px;color:#fff;font-weight:700;letter-spacing:-0.1px;">Sessions</div>
<div class="t" style="right:124px;top:319px;font-size:13.6px;color:#fff;font-weight:700;letter-spacing:-0.1px;">Engaged</div>
<div class="t" style="right:124px;top:333px;font-size:13.6px;color:#fff;font-weight:700;letter-spacing:-0.1px;">sessions</div>
<div class="abs" style="left:1378.0px;top:354.0px;width:106.0px;height:25.0px;background:#5b87b7;"></div>
<div class="abs" style="left:1484.0px;top:354.0px;width:108.0px;height:25.0px;background:#fde08f;"></div>
<div class="abs" style="left:1592.0px;top:354.0px;width:106.0px;height:25.0px;background:#f26c67;"></div>
<div class="abs" style="left:1698.0px;top:354.0px;width:106.0px;height:25.0px;background:#f98b2e;"></div>
<div class="abs" style="left:1270.5px;top:378.2px;width:107.5px;height:1.0px;background:#d2d2d2;"></div>
<div class="abs" style="left:1378.0px;top:378.2px;width:426.0px;height:1.0px;background:rgba(120,120,120,0.16);"></div>
<div class="t" id="br0l0" style="left:1280px;top:359px;font-size:13px;color:#3c3c3c;letter-spacing:-0.33px;"><span style="margin:0 1px">/</span></div>
<div class="t" style="right:443.4000000000001px;top:359px;font-size:13px;color:#303030;letter-spacing:-0.55px;">13,740</div>
<div class="t" style="right:337.20000000000005px;top:359px;font-size:13px;color:#303030;letter-spacing:-0.55px;">3,771</div>
<div class="t" style="right:231px;top:359px;font-size:13px;color:#303030;letter-spacing:-0.55px;">4,873</div>
<div class="t" style="right:124px;top:359px;font-size:13px;color:#303030;letter-spacing:-0.55px;">4,302</div>
<div class="abs" style="left:1378.0px;top:379.0px;width:106.0px;height:30.0px;background:#7fa0c8;"></div>
<div class="abs" style="left:1484.0px;top:379.0px;width:108.0px;height:30.0px;background:#fef0cc;"></div>
<div class="abs" style="left:1592.0px;top:379.0px;width:106.0px;height:30.0px;background:#f26b66;"></div>
<div class="abs" style="left:1698.0px;top:379.0px;width:106.0px;height:30.0px;background:#f77f17;"></div>
<div class="abs" style="left:1270.5px;top:408.2px;width:107.5px;height:1.0px;background:#d2d2d2;"></div>
<div class="abs" style="left:1378.0px;top:408.2px;width:426.0px;height:1.0px;background:rgba(120,120,120,0.16);"></div>
<div class="t" id="br1l0" style="left:1280px;top:387px;font-size:13px;color:#3c3c3c;letter-spacing:-0.33px;"><span style="margin:0 1px">/</span>web-cams<span style="margin:0 1px">/</span></div>
<div class="t" style="right:443.4000000000001px;top:387px;font-size:13px;color:#303030;letter-spacing:-0.55px;">11,199</div>
<div class="t" style="right:337.20000000000005px;top:387px;font-size:13px;color:#303030;letter-spacing:-0.55px;">1,328</div>
<div class="t" style="right:231px;top:387px;font-size:13px;color:#303030;letter-spacing:-0.55px;">4,882</div>
<div class="t" style="right:124px;top:387px;font-size:13px;color:#303030;letter-spacing:-0.55px;">4,750</div>
<div class="abs" style="left:1378.0px;top:409.0px;width:106.0px;height:43.0px;background:#94b0d1;"></div>
<div class="abs" style="left:1484.0px;top:409.0px;width:108.0px;height:43.0px;background:#fdd35a;"></div>
<div class="abs" style="left:1592.0px;top:409.0px;width:106.0px;height:43.0px;background:#ef4a43;"></div>
<div class="abs" style="left:1698.0px;top:409.0px;width:106.0px;height:43.0px;background:#fbb27a;"></div>
<div class="abs" style="left:1270.5px;top:451.2px;width:107.5px;height:1.0px;background:#d2d2d2;"></div>
<div class="abs" style="left:1378.0px;top:451.2px;width:426.0px;height:1.0px;background:rgba(120,120,120,0.16);"></div>
<div class="t" id="br2l0" style="left:1280px;top:417px;font-size:13px;color:#3c3c3c;letter-spacing:-0.33px;"><span style="margin:0 1px">/</span>activities<span style="margin:0 1px">/</span>fall-</div>
<div class="t" id="br2l1" style="left:1280px;top:430px;font-size:13px;color:#3c3c3c;letter-spacing:-0.33px;">and-winter<span style="margin:0 1px">/</span></div>
<div class="t" style="right:443.4000000000001px;top:417px;font-size:13px;color:#303030;letter-spacing:-0.55px;">9,168</div>
<div class="t" style="right:337.20000000000005px;top:417px;font-size:13px;color:#303030;letter-spacing:-0.55px;">5,441</div>
<div class="t" style="right:231px;top:417px;font-size:13px;color:#303030;letter-spacing:-0.55px;">6,231</div>
<div class="t" style="right:124px;top:417px;font-size:13px;color:#303030;letter-spacing:-0.55px;">2,620</div>
<div class="abs" style="left:1378.0px;top:452.0px;width:106.0px;height:29.0px;background:#9fb8d6;"></div>
<div class="abs" style="left:1484.0px;top:452.0px;width:108.0px;height:29.0px;background:#fee5a0;"></div>
<div class="abs" style="left:1592.0px;top:452.0px;width:106.0px;height:29.0px;background:#f58e8a;"></div>
<div class="abs" style="left:1698.0px;top:452.0px;width:106.0px;height:29.0px;background:#fa9d52;"></div>
<div class="abs" style="left:1270.5px;top:480.2px;width:107.5px;height:1.0px;background:#d2d2d2;"></div>
<div class="abs" style="left:1378.0px;top:480.2px;width:426.0px;height:1.0px;background:rgba(120,120,120,0.16);"></div>
<div class="t" id="br3l0" style="left:1280px;top:459px;font-size:13px;color:#3c3c3c;letter-spacing:-0.33px;"><span style="margin:0 1px">/</span>trails<span style="margin:0 1px">/</span>atv-utv<span style="margin:0 1px">/</span></div>
<div class="t" style="right:443.4000000000001px;top:459px;font-size:13px;color:#303030;letter-spacing:-0.55px;">8,007</div>
<div class="t" style="right:337.20000000000005px;top:459px;font-size:13px;color:#303030;letter-spacing:-0.55px;">3,190</div>
<div class="t" style="right:231px;top:459px;font-size:13px;color:#303030;letter-spacing:-0.55px;">3,717</div>
<div class="t" style="right:124px;top:459px;font-size:13px;color:#303030;letter-spacing:-0.55px;">3,476</div>
<div class="abs" style="left:1378.0px;top:481.0px;width:106.0px;height:30.0px;background:#abc1db;"></div>
<div class="abs" style="left:1484.0px;top:481.0px;width:108.0px;height:30.0px;background:#fee9b1;"></div>
<div class="abs" style="left:1592.0px;top:481.0px;width:106.0px;height:30.0px;background:#f7a19e;"></div>
<div class="abs" style="left:1698.0px;top:481.0px;width:106.0px;height:30.0px;background:#fba968;"></div>
<div class="abs" style="left:1270.5px;top:510.2px;width:107.5px;height:1.0px;background:#d2d2d2;"></div>
<div class="abs" style="left:1378.0px;top:510.2px;width:426.0px;height:1.0px;background:rgba(120,120,120,0.16);"></div>
<div class="t" id="br4l0" style="left:1280px;top:489px;font-size:13px;color:#3c3c3c;letter-spacing:-0.33px;"><span style="margin:0 1px">/</span>activities<span style="margin:0 1px">/</span></div>
<div class="t" style="right:443.4000000000001px;top:489px;font-size:13px;color:#303030;letter-spacing:-0.55px;">7,013</div>
<div class="t" style="right:337.20000000000005px;top:489px;font-size:13px;color:#303030;letter-spacing:-0.55px;">2,546</div>
<div class="t" style="right:231px;top:489px;font-size:13px;color:#303030;letter-spacing:-0.55px;">3,067</div>
<div class="t" style="right:124px;top:489px;font-size:13px;color:#303030;letter-spacing:-0.55px;">2,965</div>
<div class="abs" style="left:1378.0px;top:511.0px;width:106.0px;height:42.0px;background:#cddae9;"></div>
<div class="abs" style="left:1484.0px;top:511.0px;width:108.0px;height:42.0px;background:#fff6e0;"></div>
<div class="abs" style="left:1592.0px;top:511.0px;width:106.0px;height:42.0px;background:#fbc9c7;"></div>
<div class="abs" style="left:1698.0px;top:511.0px;width:106.0px;height:42.0px;background:#fdcba5;"></div>
<div class="abs" style="left:1270.5px;top:552.2px;width:107.5px;height:1.0px;background:#d2d2d2;"></div>
<div class="abs" style="left:1378.0px;top:552.2px;width:426.0px;height:1.0px;background:rgba(120,120,120,0.16);"></div>
<div class="t" id="br5l0" style="left:1280px;top:519px;font-size:13px;color:#3c3c3c;letter-spacing:-0.33px;"><span style="margin:0 1px">/</span>outdoor-</div>
<div class="t" id="br5l1" style="left:1280px;top:531px;font-size:13px;color:#3c3c3c;letter-spacing:-0.33px;">reports<span style="margin:0 1px">/</span></div>
<div class="t" style="right:443.4000000000001px;top:519px;font-size:13px;color:#303030;letter-spacing:-0.55px;">3,991</div>
<div class="t" style="right:337.20000000000005px;top:519px;font-size:13px;color:#303030;letter-spacing:-0.55px;">897</div>
<div class="t" style="right:231px;top:519px;font-size:13px;color:#303030;letter-spacing:-0.55px;">1,757</div>
<div class="t" style="right:124px;top:519px;font-size:13px;color:#303030;letter-spacing:-0.55px;">1,692</div>
<div class="abs" style="left:1378.0px;top:553.0px;width:106.0px;height:66.0px;background:#d0dcea;"></div>
<div class="abs" style="left:1484.0px;top:553.0px;width:108.0px;height:66.0px;background:#fef1cf;"></div>
<div class="abs" style="left:1592.0px;top:553.0px;width:106.0px;height:66.0px;background:#fbcdcb;"></div>
<div class="abs" style="left:1698.0px;top:553.0px;width:106.0px;height:66.0px;background:#fdd0ae;"></div>
<div class="abs" style="left:1270.5px;top:618.2px;width:107.5px;height:1.0px;background:#d2d2d2;"></div>
<div class="abs" style="left:1378.0px;top:618.2px;width:426.0px;height:1.0px;background:rgba(120,120,120,0.16);"></div>
<div class="t" id="br6l0" style="left:1280px;top:560px;font-size:13px;color:#3c3c3c;letter-spacing:-0.33px;"><span style="margin:0 1px">/</span>activities<span style="margin:0 1px">/</span>fall-</div>
<div class="t" id="br6l1" style="left:1280px;top:573px;font-size:13px;color:#3c3c3c;letter-spacing:-0.33px;">and-</div>
<div class="t" id="br6l2" style="left:1280px;top:585px;font-size:13px;color:#3c3c3c;letter-spacing:-0.33px;">winter<span style="margin:0 1px">/</span>color-</div>
<div class="t" id="br6l3" style="left:1280px;top:598px;font-size:13px;color:#3c3c3c;letter-spacing:-0.33px;">tours<span style="margin:0 1px">/</span></div>
<div class="t" style="right:443.4000000000001px;top:560px;font-size:13px;color:#303030;letter-spacing:-0.55px;">3,605</div>
<div class="t" style="right:337.20000000000005px;top:560px;font-size:13px;color:#303030;letter-spacing:-0.55px;">1,284</div>
<div class="t" style="right:231px;top:560px;font-size:13px;color:#303030;letter-spacing:-0.55px;">1,614</div>
<div class="t" style="right:124px;top:560px;font-size:13px;color:#303030;letter-spacing:-0.55px;">1,513</div>
<div class="abs" style="left:1378.0px;top:619.0px;width:106.0px;height:30.0px;background:#d9e3ee;"></div>
<div class="abs" style="left:1484.0px;top:619.0px;width:108.0px;height:30.0px;background:#fff6e0;"></div>
<div class="abs" style="left:1592.0px;top:619.0px;width:106.0px;height:30.0px;background:#fddddc;"></div>
<div class="abs" style="left:1698.0px;top:619.0px;width:106.0px;height:30.0px;background:#fddcc3;"></div>
<div class="abs" style="left:1270.5px;top:648.2px;width:107.5px;height:1.0px;background:#d2d2d2;"></div>
<div class="abs" style="left:1378.0px;top:648.2px;width:426.0px;height:1.0px;background:rgba(120,120,120,0.16);"></div>
<div class="t" id="br7l0" style="left:1280px;top:627px;font-size:13px;color:#3c3c3c;letter-spacing:-0.33px;"><span style="margin:0 1px">/</span>stay<span style="margin:0 1px">/</span></div>
<div class="t" style="right:443.4000000000001px;top:627px;font-size:13px;color:#303030;letter-spacing:-0.55px;">2,687</div>
<div class="t" style="right:337.20000000000005px;top:627px;font-size:13px;color:#303030;letter-spacing:-0.55px;">921</div>
<div class="t" style="right:231px;top:627px;font-size:13px;color:#303030;letter-spacing:-0.55px;">1,071</div>
<div class="t" style="right:124px;top:627px;font-size:13px;color:#303030;letter-spacing:-0.55px;">1,053</div>
<div class="abs" style="left:1378.0px;top:649.0px;width:106.0px;height:66.0px;background:#dae4ef;"></div>
<div class="abs" style="left:1484.0px;top:649.0px;width:108.0px;height:66.0px;background:#fff3d6;"></div>
<div class="abs" style="left:1592.0px;top:649.0px;width:106.0px;height:66.0px;background:#fcd7d5;"></div>
<div class="abs" style="left:1698.0px;top:649.0px;width:106.0px;height:66.0px;background:#fdd8bc;"></div>
<div class="abs" style="left:1270.5px;top:714.2px;width:107.5px;height:1.0px;background:#d2d2d2;"></div>
<div class="abs" style="left:1378.0px;top:714.2px;width:426.0px;height:1.0px;background:rgba(120,120,120,0.16);"></div>
<div class="t" id="br8l0" style="left:1280px;top:656px;font-size:13px;color:#3c3c3c;letter-spacing:-0.33px;"><span style="margin:0 1px">/</span>activities<span style="margin:0 1px">/</span>sprin</div>
<div class="t" id="br8l1" style="left:1280px;top:669px;font-size:13px;color:#3c3c3c;letter-spacing:-0.33px;">g-and-</div>
<div class="t" id="br8l2" style="left:1280px;top:681px;font-size:13px;color:#3c3c3c;letter-spacing:-0.33px;">summer<span style="margin:0 1px">/</span>fishing</div>
<div class="t" id="br8l3" style="left:1280px;top:694px;font-size:13px;color:#3c3c3c;letter-spacing:-0.33px;"><span style="margin:0 1px">/</span></div>
<div class="t" style="right:443.4000000000001px;top:656px;font-size:13px;color:#303030;letter-spacing:-0.55px;">2,581</div>
<div class="t" style="right:337.20000000000005px;top:656px;font-size:13px;color:#303030;letter-spacing:-0.55px;">1,107</div>
<div class="t" style="right:231px;top:656px;font-size:13px;color:#303030;letter-spacing:-0.55px;">1,281</div>
<div class="t" style="right:124px;top:656px;font-size:13px;color:#303030;letter-spacing:-0.55px;">1,194</div>
<div class="abs" style="left:1378.0px;top:715.0px;width:106.0px;height:29.0px;background:#dbe4ef;"></div>
<div class="abs" style="left:1484.0px;top:715.0px;width:108.0px;height:29.0px;background:#fff7e4;"></div>
<div class="abs" style="left:1592.0px;top:715.0px;width:106.0px;height:29.0px;background:#fde0df;"></div>
<div class="abs" style="left:1698.0px;top:715.0px;width:106.0px;height:29.0px;background:#fee0ca;"></div>
<div class="abs" style="left:1270.5px;top:743.2px;width:107.5px;height:1.0px;background:#d2d2d2;"></div>
<div class="abs" style="left:1378.0px;top:743.2px;width:426.0px;height:1.0px;background:rgba(120,120,120,0.16);"></div>
<div class="t" id="br9l0" style="left:1280px;top:723px;font-size:13px;color:#3c3c3c;letter-spacing:-0.33px;"><span style="margin:0 1px">/</span>eat<span style="margin:0 1px">/</span></div>
<div class="t" style="right:443.4000000000001px;top:723px;font-size:13px;color:#303030;letter-spacing:-0.55px;">2,562</div>
<div class="t" style="right:337.20000000000005px;top:723px;font-size:13px;color:#303030;letter-spacing:-0.55px;">811</div>
<div class="t" style="right:231px;top:723px;font-size:13px;color:#303030;letter-spacing:-0.55px;">957</div>
<div class="t" style="right:124px;top:723px;font-size:13px;color:#303030;letter-spacing:-0.55px;">894</div>
<div class="t" id="yh1" style="left:623.7px;top:775px;font-size:21px;color:#000;font-weight:700;letter-spacing:0.3px;">Fall YouTube Ads Experiment result</div>
<div class="t" style="left:992.5px;top:775px;font-size:21px;color:#000;font-weight:700;">s</div>
<div class="abs" style="left:661.500px;top:833.0px;width:9px;height:9px;border-radius:50%;background:#000"></div>
<div class="abs" style="left:661.500px;top:867.0px;width:9px;height:9px;border-radius:50%;background:#000"></div>
<div class="abs" style="left:661.500px;top:934.5px;width:9px;height:9px;border-radius:50%;background:#000"></div>
<div class="t" id="b1" style="left:698.2px;top:826px;font-size:22px;color:#000;letter-spacing:0.64px;">Ads ran from 8/25-10/5</div>
<div class="t" id="b2a" style="left:698.2px;top:860px;font-size:22px;color:#000;letter-spacing:0.18px;">Ran 2 ads with same video ju</div>
<div class="t" id="b2b" style="left:991.5px;top:860px;font-size:22px;color:#000;letter-spacing:0.59px;">st different goals- one for video view</div>
<div class="t" id="b2c" style="right:202px;top:860px;font-size:22px;color:#000;letter-spacing:0.23px;">s and one for conversions (clicks to</div>
<div class="t" id="b3" style="left:698.2px;top:893px;font-size:22px;color:#000;letter-spacing:0.58px;">the fall/winter activities page of website)</div>
<div class="t" id="b4" style="left:698.2px;top:927px;font-size:22px;color:#000;letter-spacing:0.31px;">Both had an identical spend of $1200 each</div>
<div class="t" id="yh2" style="left:623.7px;top:976px;font-size:21px;color:#000;font-weight:700;letter-spacing:0.54px;">Video Views</div>
<!--SHEET-END-->
<!--OV-START-->
<div class="abs" style="left:992px;top:770px;width:375px;height:144.500px;background:rgba(98,98,98,0.93);border-radius:4px"></div>
<div class="t" id="tt0" style="left:1001.3px;top:777px;font-size:15px;color:#fff;">a. 1.WWBIC Financial Literacy Training (December</div>
<div class="t" id="tt1" style="left:1001.3px;top:800px;font-size:15px;color:#fff;">9th)2. Fraud Prevention Workshop (October 8th)3.</div>
<div class="t" id="tt2" style="left:1001.3px;top:822px;font-size:15px;color:#fff;">Thrive Rural WI Cohort 24.DOA Grant Program (2</div>
<div class="t" id="tt3" style="left:1001.3px;top:845px;font-size:15px;color:#fff;">Million Match)5. Lumber Exchange (Beam Signing)6.</div>
<div class="t" id="tt4" style="left:1001.3px;top:867px;font-size:15px;color:#fff;">Incubator Business Plan (Thrive Rural WI)7. Forestry</div>
<div class="t" id="tt5" style="left:1001.3px;top:890px;font-size:15px;color:#fff;">Revitalization Bill (October 9th)</div>
<div class="abs" style="left:1664px;top:976px;width:239.500px;height:32.500px;background:#6b6b6b"></div>
<div class="t" id="ts" style="left:1676px;top:982px;font-size:20px;color:#fff;font-weight:700;letter-spacing:1.62px;word-spacing:1px;">2025-11-03 08:40:20</div>
<svg class="abs" style="left:1600px;top:0" width="320" height="180" viewBox="0 0 320 180">
<defs><filter id="vb" x="-5%" y="-5%" width="110%" height="110%"><feGaussianBlur stdDeviation="0.8"/></filter><clipPath id="vc"><rect x="0" y="0" width="240" height="180"/></clipPath></defs>
<rect x="0" y="0" width="320" height="180" fill="#1e1e1e"/>
<g transform="translate(40,0)" clip-path="url(#vc)"><g filter="url(#vb)">
<rect x="-2" y="-2" width="244" height="184" fill="#a9956f"/>
<polygon points="-2.7,-1.8 87.9,-1.8 87.9,76.2 69.8,79.8 35.4,108.8 -2.7,130.6" fill="#c6c7cd"/>
<polygon points="56.2,-1.8 69.8,-1.8 69.8,79.8 56.2,85.2" fill="#dcdcde"/>
<polygon points="69.8,-1.8 87.9,-1.8 87.9,76.2 69.8,79.8" fill="#bcbcc0"/>
<polygon points="61.7,32.6 67.1,33.5 67.1,78.0 61.7,79.8" fill="#4a4540"/>
<rect x="86" y="-2" width="86" height="80" fill="#7a5b3d"/>
<rect x="86" y="-2" width="12" height="80" fill="#8a6c4c"/>
<circle cx="128.700" cy="15" r="6.500" fill="#94785a"/>
<polygon points="171.4,-1.8 243.9,-1.8 243.9,145.1 231.2,126.9 189.5,79.8 171.4,76.2" fill="#cdcabc"/>
<polygon points="171.4,-1.8 193.1,-1.8 193.1,79.8 171.4,76.2" fill="#bfbaa8"/>
<polygon points="173.2,-1.8 243.9,-1.8 243.9,8.2 173.2,6.3" fill="#d6e8ea"/>
<polygon points="194.9,-1.8 199.5,-1.8 199.5,7.6 194.9,7.3" fill="#66777a"/>
<polygon points="212.1,-1.8 216.7,-1.8 216.7,7.6 212.1,7.3" fill="#66777a"/>
<polygon points="227.6,-1.8 232.1,-1.8 232.1,7.6 227.6,7.3" fill="#66777a"/>
<polygon points="-0.9,17.2 20.5,15.4 21.2,52.6 -0.9,61.7" fill="#3a3a55"/>
<polygon points="0.0,19.0 19.0,17.4 19.8,51.3 0.0,59.5" fill="#8d8fd2"/>
<polygon points="216.7,18.1 239.9,21.4 239.9,63.8 216.7,53.5" fill="#2f3350"/>
<polygon points="218.9,20.9 238.4,23.6 238.4,60.7 218.9,51.7" fill="#a3a8e4"/>
<polygon points="85.2,39.0 91.6,41.7 94.3,59.8 87.0,59.8" fill="#a86a72"/>
<polygon points="129.6,25.4 135.1,25.4 136.0,60.7 129.3,60.7" fill="#5b4aa8"/>
<polygon points="168.6,32.6 171.7,32.6 171.7,60.7 168.6,60.7" fill="#4c4a98"/>
<polygon points="164.1,50.8 168.6,49.0 168.6,61.7 164.1,61.7" fill="#8a5a50"/>
<polygon points="40.6,61.2 55.6,63.8 55.6,91.2 40.6,95.6" fill="#e2e2e2"/>
<polygon points="43.8,70.0 51.9,70.0 51.9,91.2 43.8,93.8" fill="#36363c"/>
<polygon points="72.5,93.8 167.5,93.8 177.5,125.0 196.2,185.0 55.0,185.0 65.0,130.0" fill="#ad9972"/>
<polygon points="36.2,93.8 52.5,89.4 37.5,101.2 17.5,125.0 6.2,131.2 25.0,107.5" fill="#4a4756"/>
<polygon points="75.0,80.6 112.5,75.6 141.2,74.8 168.8,80.6 167.5,85.0 141.2,78.8 108.8,78.8 80.0,86.9" fill="#6b4b34"/>
<polygon points="80.0,86.9 108.8,78.8 141.2,78.8 167.5,85.0 166.9,97.5 141.2,92.2 106.2,92.8 83.8,101.9" fill="#4b3323"/>
<polygon points="52.5,90.0 75.0,83.1 70.6,96.2 47.5,125.0 31.2,148.1 -1.2,146.9 -1.2,140.0 17.5,125.0 37.5,101.2" fill="#6c4c36"/>
<polygon points="75.0,84.4 73.1,102.5 67.5,112.5 50.0,135.0 41.2,148.1 31.2,148.1 47.5,125.0 70.6,96.2" fill="#4a3222"/>
<polygon points="-1.2,146.9 41.2,148.1 37.5,160.0 35.0,185.0 -1.2,185.0" fill="#3c2a1e"/>
<polygon points="167.5,81.2 185.0,79.8 195.0,97.5 231.2,155.0 231.2,185.0 195.0,185.0 185.0,140.0 175.0,101.2" fill="#6c4c36"/>
<polygon points="166.9,82.5 175.0,101.2 185.0,140.0 195.0,185.0 183.1,185.0 175.0,130.0 166.2,97.5" fill="#4a3222"/>
<polygon points="185.0,78.8 191.9,80.0 235.6,137.5 233.1,151.2 222.5,135.0 195.0,97.5" fill="#2c2b30"/>
<polygon points="233.1,151.2 235.6,137.5 241.2,146.2 241.2,185.0 231.2,185.0 231.2,155.0" fill="#b5a888"/>
<ellipse cx="88.8" cy="62.6" rx="3.600" ry="5.500" fill="#b59a84"/>
<ellipse cx="112.4" cy="61.7" rx="3.600" ry="5.500" fill="#b08f7c"/>
<ellipse cx="133.3" cy="60.7" rx="3.600" ry="5.500" fill="#a88d78"/>
<ellipse cx="164.1" cy="64.4" rx="3.600" ry="5.500" fill="#3a3a40"/>
<ellipse cx="172.3" cy="69.8" rx="3.600" ry="5.500" fill="#a9a18f"/>
<ellipse cx="74.3" cy="71.6" rx="3.600" ry="5.500" fill="#d6d3cf"/>
<ellipse cx="112.4" cy="68.0" rx="5" ry="4" fill="#5a2a2a"/>
<ellipse cx="5" cy="115" rx="4.500" ry="5.500" fill="#5d4a3e"/>
<polygon points="-1.2,122.5 7.5,123.8 8.8,140.0 -1.2,140.0" fill="#a9b0b6"/>
<polygon points="18.8,140.0 36.2,129.4 38.8,133.8 21.2,145.0" fill="#bdb8c8"/>
<polygon points="97.5,138.8 107.8,138.1 106.5,185.0 96.2,185.0" fill="#49311f"/>
<ellipse cx="118" cy="120.500" rx="4.300" ry="5" fill="#bba992"/>
<polygon points="110.0,129.4 128.1,129.4 131.5,153.8 127.5,185.0 106.2,185.0 104.0,155.0" fill="#b7b2a6"/>
<rect x="110.800" y="118" width="0.800" height="12" fill="#222"/>
<polygon points="48.8,136.2 57.8,136.2 57.8,151.2 48.8,151.2" fill="#f6f6f2"/>
<polygon points="161.9,136.9 170.9,136.9 170.9,152.8 161.9,152.8" fill="#f7f2e6"/>
<rect x="53" y="151" width="0.900" height="30" fill="#2a2a2a"/>
<rect x="165.700" y="152.500" width="0.900" height="30" fill="#2a2a2a"/>
<ellipse cx="144" cy="166" rx="9" ry="2.500" fill="#cfbd97"/>
</g></g>
<rect x="0" y="148" width="124" height="32" fill="rgba(0,0,0,0.62)"/>
<text x="4.500" y="168.600" font-family="Liberation Sans,sans-serif" font-weight="700" font-size="15.700" fill="#fff">Sawyer County</text>
</svg>
<div class="abs" style="left:0;top:1015px;width:1920px;height:5px;background:#f1f1f1"></div>
<div class="abs" style="left:5px;top:1007px;width:8px;height:8px;background:radial-gradient(circle at 100% 0,rgba(241,241,241,0) 7.500px,#f1f1f1 8.500px)"></div>
<!--OV-END-->
</div>
</body>
</html>
